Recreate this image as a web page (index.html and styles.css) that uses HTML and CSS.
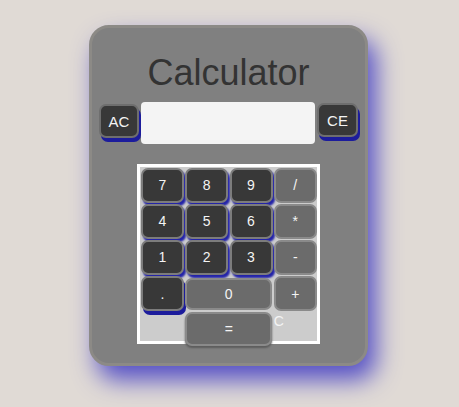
FILE: index.html
```html
<!DOCTYPE html>
<html>
<head>
<meta charset="utf-8">
<link rel="stylesheet" href="styles.css">
</head>
<body>
<div class="calc">
  <h1 class="title">Calculator</h1>
  <div class="top-row">
    <button class="btn dark side ac">AC</button>
    <div class="display"></div>
    <button class="btn dark side">CE</button>
  </div>
  <div class="keypad">
    <button class="btn dark">7</button>
    <button class="btn dark">8</button>
    <button class="btn dark">9</button>
    <button class="btn light">/</button>
    <button class="btn dark">4</button>
    <button class="btn dark">5</button>
    <button class="btn dark">6</button>
    <button class="btn light">*</button>
    <button class="btn dark">1</button>
    <button class="btn dark">2</button>
    <button class="btn dark">3</button>
    <button class="btn light">-</button>
    <button class="btn dark dot">.</button>
    <button class="btn light wide">0</button>
    <button class="btn light">+</button>
    <span class="empty"></span>
    <button class="btn light wide eq">=</button>
    <span class="ctext">C</span>
  </div>
</div>
</body>
</html>
```
FILE: styles.css
```css
html, body {
  margin: 0;
  padding: 0;
}
body {
  background: #e0dad5;
  font-family: "Liberation Sans", Arial, sans-serif;
  width: 459px;
  height: 407px;
  overflow: hidden;
}
.calc {
  box-sizing: border-box;
  margin: 25px 0 0 89px;
  width: 279px;
  height: 341px;
  background: #808080;
  border: 3px solid #8c8a86;
  border-radius: 20px;
  box-shadow: 8px 14px 24px #5550c6;
  display: flex;
  flex-direction: column;
  align-items: center;
}
.title {
  margin: 24px 0 8px 0;
  font-size: 36px;
  font-weight: normal;
  color: #333333;
  line-height: 42px;
}
.top-row {
  display: flex;
  align-items: flex-start;
  gap: 2px;
}
.btn {
  box-sizing: border-box;
  font-family: "Liberation Sans", Arial, sans-serif;
  font-size: 14px;
  color: #f4f4f4;
  border: 2px solid #7c7c7c;
  border-radius: 7px;
  padding: 0;
  margin: 0;
}
.dark {
  background: #383838;
  box-shadow: 2px 3px 2px #2323a8;
}
.light {
  background: #6b6b6b;
  border-color: #8a8a8a;
}
.side {
  width: 41px;
  height: 34px;
  margin-top: 1px;
  box-shadow: 2px 4px 0 #1c1c9c;
  border-color: #6e6e6e;
  font-size: 15px;
}
.side.ac {
  width: 40px;
  margin-top: 2px;
}
.display {
  width: 174px;
  height: 42px;
  background: #f4f4f4;
  border-radius: 4px;
}
.keypad {
  margin-top: 20px;
  width: 177px;
  height: 174px;
  border: 3px solid #ffffff;
  background: #cccccc;
  display: grid;
  grid-template-columns: repeat(4, 1fr);
  grid-template-rows: repeat(5, 36.2px);
}
.keypad .btn {
  margin: 0.5px 0 0 1px;
  width: 43px;
  height: 35px;
}
.keypad .wide {
  grid-column: span 2;
  width: 87px;
  margin-top: 2px;
  height: 32px;
}
.keypad .dot {
  box-shadow: 2px 4px 0 #1c1c9c;
}
.keypad .eq {
  margin-top: 0;
  height: 34px;
  box-shadow: 0 2px 2px #5c5c5c;
}
.ctext {
  color: #f4f4f4;
  font-size: 14px;
  padding: 1px 0 0 1px;
}
```
